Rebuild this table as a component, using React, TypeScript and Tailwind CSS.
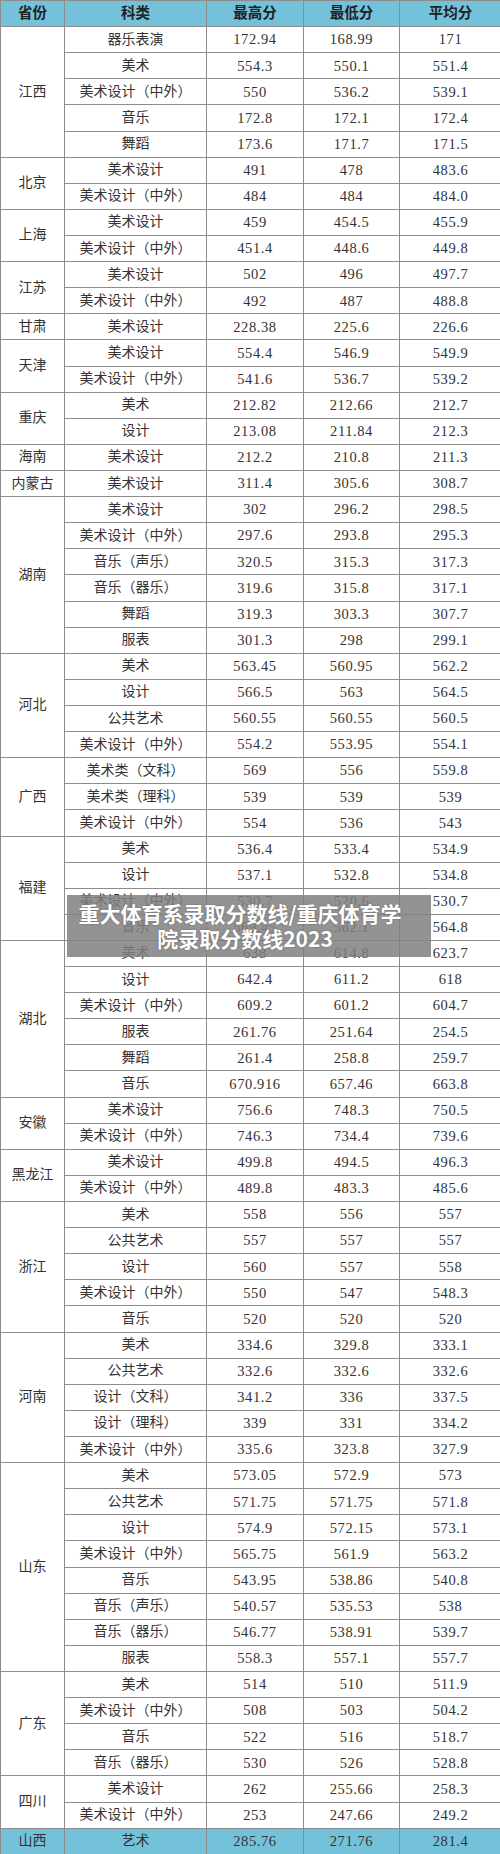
type Row = [string, string, string, string];
type Group = { province: string; rows: Row[] };

const groups: Group[] = [
  {
    province: "江西",
    rows: [
      ["器乐表演", "172.94", "168.99", "171"],
      ["美术", "554.3", "550.1", "551.4"],
      ["美术设计（中外）", "550", "536.2", "539.1"],
      ["音乐", "172.8", "172.1", "172.4"],
      ["舞蹈", "173.6", "171.7", "171.5"],
    ],
  },
  {
    province: "北京",
    rows: [
      ["美术设计", "491", "478", "483.6"],
      ["美术设计（中外）", "484", "484", "484.0"],
    ],
  },
  {
    province: "上海",
    rows: [
      ["美术设计", "459", "454.5", "455.9"],
      ["美术设计（中外）", "451.4", "448.6", "449.8"],
    ],
  },
  {
    province: "江苏",
    rows: [
      ["美术设计", "502", "496", "497.7"],
      ["美术设计（中外）", "492", "487", "488.8"],
    ],
  },
  { province: "甘肃", rows: [["美术设计", "228.38", "225.6", "226.6"]] },
  {
    province: "天津",
    rows: [
      ["美术设计", "554.4", "546.9", "549.9"],
      ["美术设计（中外）", "541.6", "536.7", "539.2"],
    ],
  },
  {
    province: "重庆",
    rows: [
      ["美术", "212.82", "212.66", "212.7"],
      ["设计", "213.08", "211.84", "212.3"],
    ],
  },
  { province: "海南", rows: [["美术设计", "212.2", "210.8", "211.3"]] },
  { province: "内蒙古", rows: [["美术设计", "311.4", "305.6", "308.7"]] },
  {
    province: "湖南",
    rows: [
      ["美术设计", "302", "296.2", "298.5"],
      ["美术设计（中外）", "297.6", "293.8", "295.3"],
      ["音乐（声乐）", "320.5", "315.3", "317.3"],
      ["音乐（器乐）", "319.6", "315.8", "317.1"],
      ["舞蹈", "319.3", "303.3", "307.7"],
      ["服表", "301.3", "298", "299.1"],
    ],
  },
  {
    province: "河北",
    rows: [
      ["美术", "563.45", "560.95", "562.2"],
      ["设计", "566.5", "563", "564.5"],
      ["公共艺术", "560.55", "560.55", "560.5"],
      ["美术设计（中外）", "554.2", "553.95", "554.1"],
    ],
  },
  {
    province: "广西",
    rows: [
      ["美术类（文科）", "569", "556", "559.8"],
      ["美术类（理科）", "539", "539", "539"],
      ["美术设计（中外）", "554", "536", "543"],
    ],
  },
  {
    province: "福建",
    rows: [
      ["美术", "536.4", "533.4", "534.9"],
      ["设计", "537.1", "532.8", "534.8"],
      ["美术设计（中外）", "530.7", "520.6", "530.7"],
      ["音乐", "569.45", "562.1", "564.8"],
    ],
  },
  {
    province: "湖北",
    rows: [
      ["美术", "638", "614.8", "623.7"],
      ["设计", "642.4", "611.2", "618"],
      ["美术设计（中外）", "609.2", "601.2", "604.7"],
      ["服表", "261.76", "251.64", "254.5"],
      ["舞蹈", "261.4", "258.8", "259.7"],
      ["音乐", "670.916", "657.46", "663.8"],
    ],
  },
  {
    province: "安徽",
    rows: [
      ["美术设计", "756.6", "748.3", "750.5"],
      ["美术设计（中外）", "746.3", "734.4", "739.6"],
    ],
  },
  {
    province: "黑龙江",
    rows: [
      ["美术设计", "499.8", "494.5", "496.3"],
      ["美术设计（中外）", "489.8", "483.3", "485.6"],
    ],
  },
  {
    province: "浙江",
    rows: [
      ["美术", "558", "556", "557"],
      ["公共艺术", "557", "557", "557"],
      ["设计", "560", "557", "558"],
      ["美术设计（中外）", "550", "547", "548.3"],
      ["音乐", "520", "520", "520"],
    ],
  },
  {
    province: "河南",
    rows: [
      ["美术", "334.6", "329.8", "333.1"],
      ["公共艺术", "332.6", "332.6", "332.6"],
      ["设计（文科）", "341.2", "336", "337.5"],
      ["设计（理科）", "339", "331", "334.2"],
      ["美术设计（中外）", "335.6", "323.8", "327.9"],
    ],
  },
  {
    province: "山东",
    rows: [
      ["美术", "573.05", "572.9", "573"],
      ["公共艺术", "571.75", "571.75", "571.8"],
      ["设计", "574.9", "572.15", "573.1"],
      ["美术设计（中外）", "565.75", "561.9", "563.2"],
      ["音乐", "543.95", "538.86", "540.8"],
      ["音乐（声乐）", "540.57", "535.53", "538"],
      ["音乐（器乐）", "546.77", "538.91", "539.7"],
      ["服表", "558.3", "557.1", "557.7"],
    ],
  },
  {
    province: "广东",
    rows: [
      ["美术", "514", "510", "511.9"],
      ["美术设计（中外）", "508", "503", "504.2"],
      ["音乐", "522", "516", "518.7"],
      ["音乐（器乐）", "530", "526", "528.8"],
    ],
  },
  {
    province: "四川",
    rows: [
      ["美术设计", "262", "255.66", "258.3"],
      ["美术设计（中外）", "253", "247.66", "249.2"],
    ],
  },
];

const cell = "border border-[#8c8c8c] text-center align-middle p-0 leading-none";
const num = cell + " tracking-[0.6px] text-[14.5px]";

export default function App() {
  return (
    <div className="relative w-[500px] overflow-hidden bg-white text-[14px] text-[#333] [font-family:'Liberation_Serif','Noto_Sans_CJK_SC',serif]">
      <table className="table-fixed w-[501px] border-collapse">
        <colgroup>
          <col className="w-[64px]" />
          <col className="w-[142px]" />
          <col className="w-[97px]" />
          <col className="w-[96px]" />
          <col className="w-[102px]" />
        </colgroup>
        <thead>
          <tr className="h-[26.11px] bg-[#74c1da] font-bold text-[#222] text-[14.5px]">
            <th className={cell}>省份</th>
            <th className={cell}>科类</th>
            <th className={cell}>最高分</th>
            <th className={cell}>最低分</th>
            <th className={cell}>平均分</th>
          </tr>
        </thead>
        <tbody>
          {groups.map((g) =>
            g.rows.map((r, i) => (
              <tr key={g.province + i} className="h-[26.11px]">
                {i === 0 && (
                  <td className={cell} rowSpan={g.rows.length}>
                    {g.province}
                  </td>
                )}
                <td className={cell}>{r[0]}</td>
                <td className={num}>{r[1]}</td>
                <td className={num}>{r[2]}</td>
                <td className={num}>{r[3]}</td>
              </tr>
            ))
          )}
          <tr className="h-[26.11px] bg-[#74c1da]">
            <td className={cell}>山西</td>
            <td className={cell}>艺术</td>
            <td className={num}>285.76</td>
            <td className={num}>271.76</td>
            <td className={num}>281.4</td>
          </tr>
        </tbody>
      </table>

      {/* watermark banner over the table */}
      <div className="absolute left-[67px] top-[895px] w-[364px] h-[62px] bg-[#808080]/85 flex flex-col justify-center pl-[10px] pr-[28px] text-white font-bold text-[21px] leading-[25px] text-center [font-family:'Noto_Sans_CJK_SC',sans-serif] [text-shadow:0_0_2px_rgba(0,0,0,0.3)]">
        <span className="whitespace-nowrap">重大体育系录取分数线/重庆体育学</span>
        <span className="whitespace-nowrap pl-[10px]">院录取分数线2023</span>
      </div>
    </div>
  );
}
